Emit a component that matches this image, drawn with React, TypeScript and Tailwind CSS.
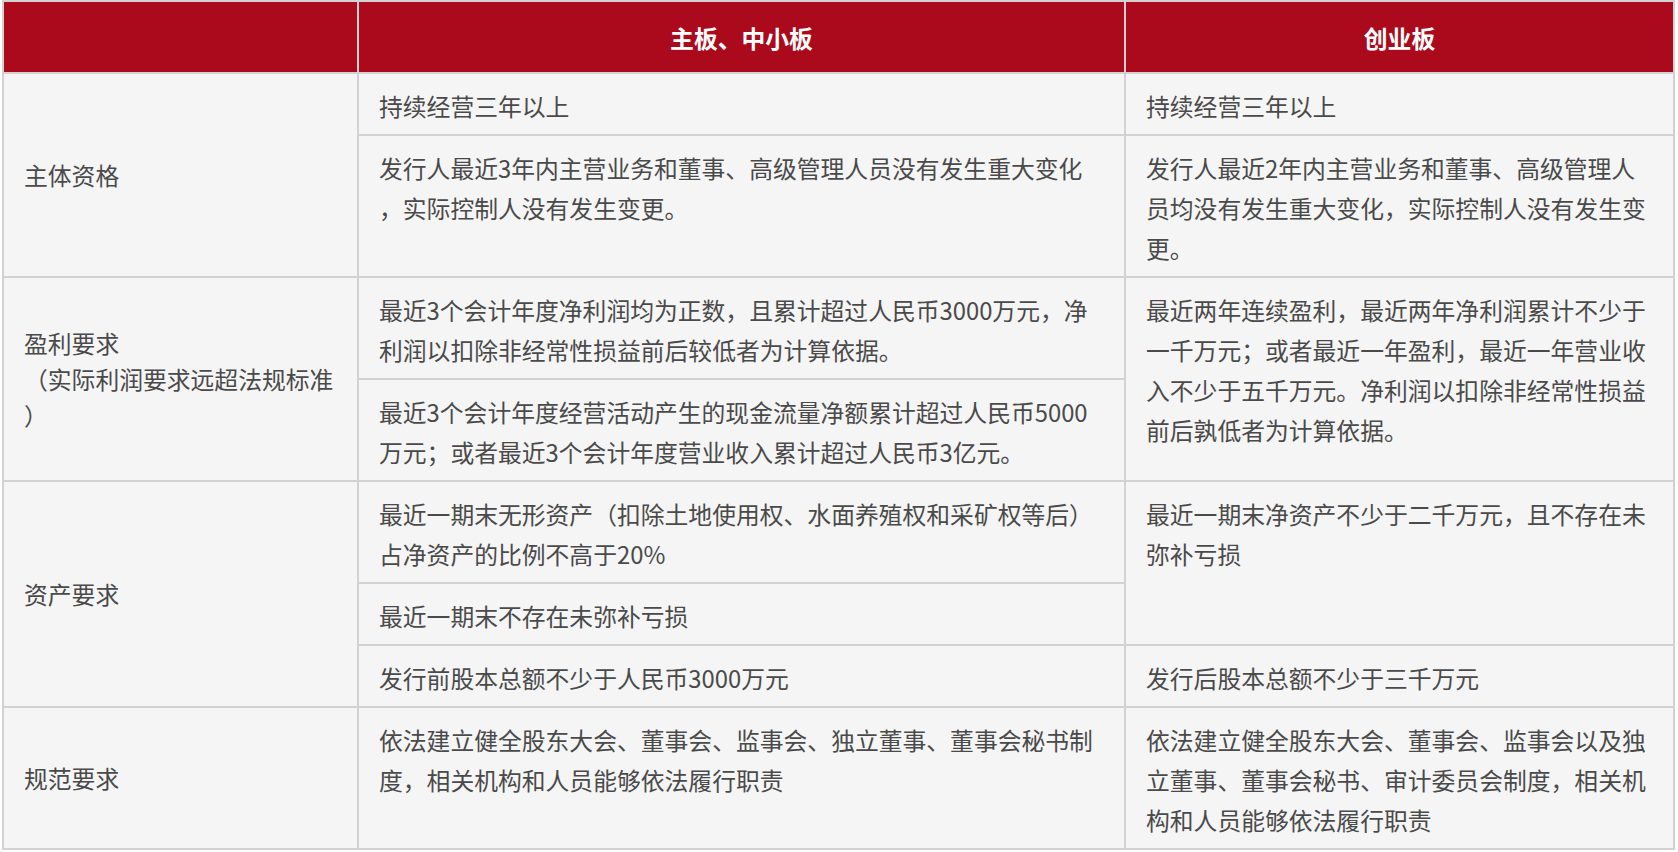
import React from "react";

type Lines = string[];

const Text = ({ lines }: { lines: Lines }) => (
  <>
    {lines.map((l, i) => (
      <div key={i} className="whitespace-nowrap">
        {l}
      </div>
    ))}
  </>
);

const Cell = ({
  lines,
  className = "",
}: {
  lines: Lines;
  className?: string;
}) => (
  <div
    className={`bg-[#f5f5f5] px-[20px] pt-[12px] pb-[8px] leading-[40px] ${className}`}
  >
    <Text lines={lines} />
  </div>
);

const Label = ({
  lines,
  className = "",
}: {
  lines: Lines;
  className?: string;
}) => (
  <div
    className={`bg-[#f5f5f5] px-[20px] flex flex-col justify-center leading-[36px] ${className}`}
  >
    <Text lines={lines} />
  </div>
);

export default function App() {
  return (
    <div className="min-h-[852px] w-full bg-white">
      <div className="ml-[2px] w-[1673px] bg-[#d2d2d2] p-[2px] grid grid-cols-[353px_765px_547px] gap-[2px] text-[23.8px] text-[#4a4a4a] font-['Noto_Sans_CJK_SC','Noto_Sans',sans-serif]">
        {/* header */}
        <div className="bg-[#ab0a1c] h-[70px]" />
        <div className="bg-[#ab0a1c] h-[70px] pt-[16px] pb-[14px] leading-[40px] text-center font-bold text-white">
          主板、中小板
        </div>
        <div className="bg-[#ab0a1c] h-[70px] pt-[16px] pb-[14px] leading-[40px] text-center font-bold text-white">
          创业板
        </div>

        {/* 主体资格 */}
        <Label lines={["主体资格"]} className="row-span-2" />
        <Cell lines={["持续经营三年以上"]} />
        <Cell lines={["持续经营三年以上"]} />
        <Cell
          lines={[
            "发行人最近3年内主营业务和董事、高级管理人员没有发生重大变化",
            "，实际控制人没有发生变更。",
          ]}
        />
        <Cell
          lines={[
            "发行人最近2年内主营业务和董事、高级管理人",
            "员均没有发生重大变化，实际控制人没有发生变",
            "更。",
          ]}
        />

        {/* 盈利要求 */}
        <Label
          lines={["盈利要求", "（实际利润要求远超法规标准", "）"]}
          className="row-span-2"
        />
        <Cell
          lines={[
            "最近3个会计年度净利润均为正数，且累计超过人民币3000万元，净",
            "利润以扣除非经常性损益前后较低者为计算依据。",
          ]}
        />
        <Cell
          className="row-span-2"
          lines={[
            "最近两年连续盈利，最近两年净利润累计不少于",
            "一千万元；或者最近一年盈利，最近一年营业收",
            "入不少于五千万元。净利润以扣除非经常性损益",
            "前后孰低者为计算依据。",
          ]}
        />
        <Cell
          lines={[
            "最近3个会计年度经营活动产生的现金流量净额累计超过人民币5000",
            "万元；或者最近3个会计年度营业收入累计超过人民币3亿元。",
          ]}
        />

        {/* 资产要求 */}
        <Label lines={["资产要求"]} className="row-span-3" />
        <Cell
          lines={[
            "最近一期末无形资产（扣除土地使用权、水面养殖权和采矿权等后）",
            "占净资产的比例不高于20%",
          ]}
        />
        <Cell
          className="row-span-2"
          lines={["最近一期末净资产不少于二千万元，且不存在未", "弥补亏损"]}
        />
        <Cell lines={["最近一期末不存在未弥补亏损"]} />
        <Cell lines={["发行前股本总额不少于人民币3000万元"]} />
        <Cell lines={["发行后股本总额不少于三千万元"]} />

        {/* 规范要求 */}
        <Label lines={["规范要求"]} />
        <Cell
          lines={[
            "依法建立健全股东大会、董事会、监事会、独立董事、董事会秘书制",
            "度，相关机构和人员能够依法履行职责",
          ]}
        />
        <Cell
          lines={[
            "依法建立健全股东大会、董事会、监事会以及独",
            "立董事、董事会秘书、审计委员会制度，相关机",
            "构和人员能够依法履行职责",
          ]}
        />
      </div>
    </div>
  );
}
